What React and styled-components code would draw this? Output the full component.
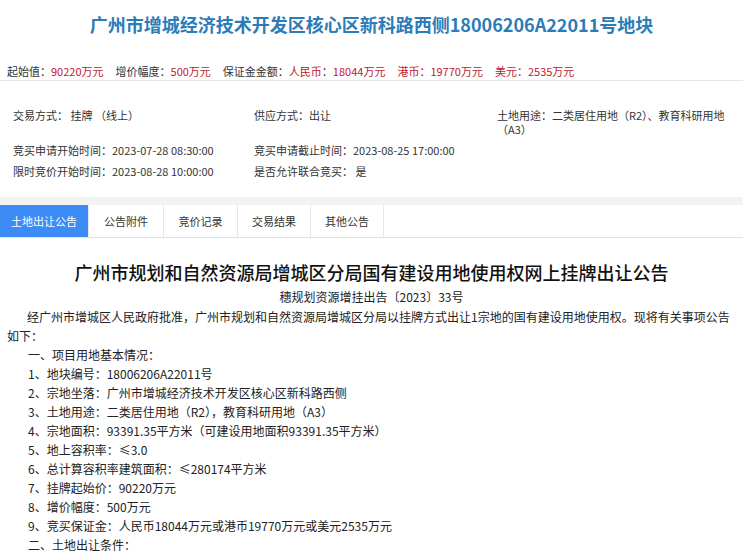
import React from 'react'
import styled, { createGlobalStyle } from 'styled-components'

const GlobalStyle = createGlobalStyle`
  html, body {
    margin: 0;
    padding: 0;
    background: #fff;
  }
  body {
    font-family: "Noto Sans CJK SC", "Noto Sans", sans-serif;
    color: #333;
  }
`

const prices = [
  { label: '起始值', value: '90220万元' },
  { label: '增价幅度', value: '500万元' },
  { label: '保证金金额', value: '人民币：18044万元', mixed: true },
  { label: '港币', value: '19770万元', red: true },
  { label: '美元', value: '2535万元', red: true },
]

const tabs = ['土地出让公告', '公告附件', '竞价记录', '交易结果', '其他公告']
const tabWidths = [88, 74, 73, 72, 72]

const items = [
  '一、项目用地基本情况：',
  '1、地块编号：18006206A22011号',
  '2、宗地坐落：广州市增城经济技术开发区核心区新科路西侧',
  '3、土地用途：二类居住用地（R2），教育科研用地（A3）',
  '4、宗地面积：93391.35平方米（可建设用地面积93391.35平方米）',
  '5、地上容积率：≤3.0',
  '6、总计算容积率建筑面积：≤280174平方米',
  '7、挂牌起始价：90220万元',
  '8、增价幅度：500万元',
  '9、竞买保证金：人民币18044万元或港币19770万元或美元2535万元',
  '二、土地出让条件：',
]

const App = () => {
  return (
    <Page>
      <GlobalStyle />
      <Title>广州市增城经济技术开发区核心区新科路西侧18006206A22011号地块</Title>
      <PriceBar>
        {prices.map((p) => (
          <PriceItem key={p.label}>
            <Label red={p.red}>{p.label}：</Label>
            {p.mixed ? (
              <>
                <Value>人民币</Value>
                <Label>：</Label>
                <Value>18044万元</Value>
              </>
            ) : (
              <Value>{p.value}</Value>
            )}
          </PriceItem>
        ))}
      </PriceBar>
      <InfoGrid>
        <Cell>交易方式： 挂牌 （线上）</Cell>
        <Cell>供应方式：出让</Cell>
        <Cell>土地用途：二类居住用地（R2）、教育科研用地<br />（A3）</Cell>
        <Cell>竞买申请开始时间：2023-07-28 08:30:00</Cell>
        <Cell>竞买申请截止时间：2023-08-25 17:00:00</Cell>
        <Cell />
        <Cell>限时竞价开始时间：2023-08-28 10:00:00</Cell>
        <Cell>是否允许联合竞买： 是</Cell>
        <Cell />
      </InfoGrid>
      <TabBar>
        {tabs.map((t, i) => (
          <Tab key={t} active={i === 0} w={tabWidths[i]}>{t}</Tab>
        ))}
      </TabBar>
      <Article>
        <Heading>广州市规划和自然资源局增城区分局国有建设用地使用权网上挂牌出让公告</Heading>
        <DocNo>穗规划资源增挂出告〔2023〕33号</DocNo>
        <Para>经广州市增城区人民政府批准，广州市规划和自然资源局增城区分局以挂牌方式出让1宗地的国有建设用地使用权。现将有关事项公告如下：</Para>
        <List>
          {items.map((it) => (
            <Item key={it}>{it}</Item>
          ))}
        </List>
      </Article>
    </Page>
  )
}

const Page = styled.div`
  width: 743px;
  height: 552px;
  overflow: hidden;
`

const Title = styled.h1`
  margin: 0;
  padding-top: 12px;
  font-size: 18px;
  line-height: 24px;
  font-weight: 700;
  color: #2b7cb8;
  text-align: center;
`

const PriceBar = styled.div`
  display: flex;
  gap: 12px;
  margin-top: 26px;
  padding-left: 7px;
  height: 18px;
  line-height: 18px;
  font-size: 11px;
  border-bottom: 1px solid #e6e6e6;
`

const PriceItem = styled.span`
  white-space: nowrap;
`

const Label = styled.span`
  color: ${(p) => (p.red ? '#c0162e' : '#333')};
`

const Value = styled.span`
  color: #c0162e;
`

const InfoGrid = styled.div`
  display: grid;
  grid-template-columns: 241px 243px 1fr;
  row-gap: 7px;
  margin-top: 27px;
  padding-left: 13px;
  font-size: 11px;
  line-height: 14px;
  color: #333;
`

const Cell = styled.div`
  white-space: nowrap;
`

const TabBar = styled.div`
  display: flex;
  margin-top: 19px;
  border-top: 8px solid #f3f3f3;
  border-bottom: 1px solid #e2e2e2;
  height: 32px;
`

const Tab = styled.div`
  width: ${(p) => p.w}px;
  display: flex;
  align-items: center;
  justify-content: center;
  font-size: 11px;
  color: ${(p) => (p.active ? '#fff' : '#333')};
  background: ${(p) => (p.active ? '#3d8cf6' : '#fff')};
  border-right: 1px solid #e6e6e6;
`

const Article = styled.div`
  color: #222;
`

const Heading = styled.h2`
  margin: 22px 0 0;
  font-size: 18px;
  line-height: 24px;
  font-weight: 500;
  text-align: center;
  color: #111;
`

const DocNo = styled.div`
  margin-top: 3px;
  font-size: 12px;
  line-height: 19px;
  text-align: center;
`

const Para = styled.p`
  margin: 1px 0 0;
  padding: 0 8px 0 7px;
  text-indent: 20px;
  font-size: 12px;
  line-height: 19px;
`

const List = styled.div`
  padding-left: 28px;
`

const Item = styled.div`
  font-size: 12px;
  line-height: 19px;
  white-space: nowrap;
`

export default App
